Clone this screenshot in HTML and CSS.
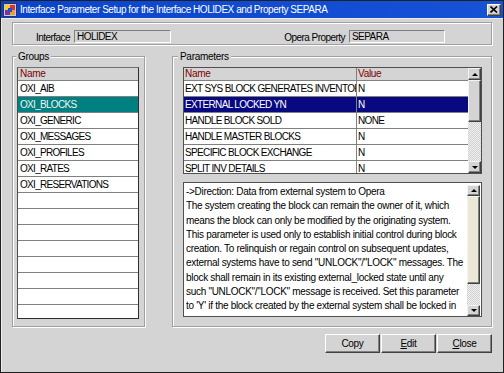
FILE: index.html
```html
<!DOCTYPE html>
<html lang="en">
<head>
    <meta charset="UTF-8">
    <title>Interface Parameter Setup</title>
    <link rel="stylesheet" href="styles.css">
</head>
<body>

<div class="window">

    <div class="titlebar">
        <svg class="app-icon" width="14" height="14" viewBox="0 0 14 14">
            <rect x="0.5" y="0.5" width="13" height="13" fill="#c8c8e8" stroke="#303060"/>
            <rect x="2" y="2" width="5" height="5" fill="#f0d020"/>
            <rect x="7" y="2" width="5" height="5" fill="#e03030"/>
            <rect x="2" y="7" width="5" height="5" fill="#8030a0"/>
            <rect x="7" y="7" width="5" height="5" fill="#f0a020"/>
            <rect x="5" y="5" width="4" height="4" fill="#2050d0"/>
        </svg>
        <span class="title">Interface Parameter Setup for the Interface HOLIDEX and Property SEPARA</span>
        <span class="close-btn">
            <svg width="8" height="7" viewBox="0 0 8 7">
                <path d="M0.5 0.5 L7 6.5 M7 0.5 L0.5 6.5" stroke="#000" stroke-width="1.6"/>
            </svg>
        </span>
    </div>

    <div class="content">

        <div class="top-panel">
            <span class="label interface-label">Interface</span>
            <span class="input interface-input">HOLIDEX</span>
            <span class="label property-label">Opera Property</span>
            <span class="input property-input">SEPARA</span>
        </div>

        <div class="frames">
            <fieldset class="frame groups">
                <legend>Groups</legend>
                <div class="list">
                    <div class="list-head">Name</div>
                    <div class="list-row">OXI_AIB</div>
                    <div class="list-row selected">OXI_BLOCKS</div>
                    <div class="list-row">OXI_GENERIC</div>
                    <div class="list-row">OXI_MESSAGES</div>
                    <div class="list-row">OXI_PROFILES</div>
                    <div class="list-row">OXI_RATES</div>
                    <div class="list-row">OXI_RESERVATIONS</div>
                    <div class="list-row"></div>
                    <div class="list-row"></div>
                    <div class="list-row"></div>
                    <div class="list-row"></div>
                    <div class="list-row"></div>
                    <div class="list-row"></div>
                    <div class="list-row"></div>
                    <div class="list-row"></div>
                </div>
            </fieldset>

            <fieldset class="frame params">
                <legend>Parameters</legend>
                <div class="grid-box">
                    <div class="table">
                        <div class="tr th">
                            <div class="td name">Name</div>
                            <div class="td value">Value</div>
                        </div>
                        <div class="tr">
                            <div class="td name">EXT SYS BLOCK GENERATES INVENTORY</div>
                            <div class="td value">N</div>
                        </div>
                        <div class="tr selected">
                            <div class="td name">EXTERNAL LOCKED YN</div>
                            <div class="td value">N</div>
                        </div>
                        <div class="tr">
                            <div class="td name">HANDLE BLOCK SOLD</div>
                            <div class="td value">NONE</div>
                        </div>
                        <div class="tr">
                            <div class="td name">HANDLE MASTER BLOCKS</div>
                            <div class="td value">N</div>
                        </div>
                        <div class="tr">
                            <div class="td name">SPECIFIC BLOCK EXCHANGE</div>
                            <div class="td value">N</div>
                        </div>
                        <div class="tr">
                            <div class="td name">SPLIT INV DETAILS</div>
                            <div class="td value">N</div>
                        </div>
                    </div>
                    <div class="vscroll">
                        <div class="sbtn up"></div>
                        <div class="thumb"></div>
                        <div class="track"></div>
                        <div class="sbtn down"></div>
                    </div>
                </div>

                <div class="desc">
                    <div class="desc-text">
                        -&gt;Direction: Data from external system to Opera<br>
                        The system creating the block can remain the owner of it, which<br>
                        means the block can only be modified by the originating system.<br>
                        This parameter is used only to establish initial control during block<br>
                        creation. To relinquish or regain control on subsequent updates,<br>
                        external systems have to send "UNLOCK"/"LOCK" messages. The<br>
                        block shall remain in its existing external_locked state until any<br>
                        such "UNLOCK"/"LOCK" message is received. Set this parameter<br>
                        to 'Y' if the block created by the external system shall be locked in<br>
                        OPERA.
                    </div>
                    <div class="vscroll desc-scroll">
                        <div class="sbtn up"></div>
                        <div class="thumb"></div>
                        <div class="track"></div>
                        <div class="sbtn down"></div>
                    </div>
                </div>
            </fieldset>
        </div>

        <div class="actions">
            <button class="btn">Copy</button>
            <button class="btn"><u>E</u>dit</button>
            <button class="btn"><u>C</u>lose</button>
        </div>

    </div>
</div>

</body>
</html>
```

FILE: styles.css
```css
* {
    box-sizing: border-box;
}

html, body {
    margin: 0;
    padding: 0;
}

body {
    width: 504px;
    height: 373px;
    overflow: hidden;
    background: #d4d4d4;
    font-family: "Liberation Sans", Arial, sans-serif;
    font-size: 10px;
    letter-spacing: -0.3px;
    color: #000;
}

.window {
    width: 504px;
    height: 373px;
    border: 1px solid #202020;
    background: #d4d4d4;
    display: flex;
    flex-direction: column;
}

/* title bar */

.titlebar {
    height: 17px;
    display: flex;
    align-items: center;
    padding: 0 2px 0 2px;
    background: linear-gradient(to right, #0a44cc, #1652d6);
    color: #fff;
}

.app-icon {
    flex: none;
    margin-right: 3px;
}

.title {
    font-size: 10px;
    letter-spacing: -0.45px;
    white-space: nowrap;
    flex: 1;
}

.close-btn {
    flex: none;
    width: 14px;
    height: 12px;
    display: flex;
    align-items: center;
    justify-content: center;
    background: #d4d4d4;
    border: 1px solid;
    border-color: #fff #404040 #404040 #fff;
    box-shadow: inset -1px -1px #808080;
}

/* main area */

.content {
    flex: 1;
    padding: 4px 11px 0 11px;
    box-shadow: inset 1px 1px #ececec;
}

.top-panel {
    height: 23px;
    display: flex;
    align-items: flex-end;
    padding: 0 0 1px 1px;
    border: 1px solid #a0a0a0;
    box-shadow: inset 1px 1px #fff, 1px 1px #fff;
}

.label {
    text-align: right;
    line-height: 13px;
    margin-bottom: -1px;
    margin-right: 4px;
    letter-spacing: -0.55px;
}

.interface-label {
    width: 56px;
}

.property-label {
    width: 174px;
}

.input {
    height: 13px;
    line-height: 11px;
    padding: 0 2px;
    letter-spacing: -0.55px;
    border: 1px solid;
    border-color: #808080 #fff #fff #808080;
    background: #d4d4d4;
}

.interface-input {
    width: 97px;
}

.property-input {
    width: 96px;
}

/* frames */

.frames {
    display: flex;
    gap: 27px;
    margin-top: 5px;
}

.frame {
    margin: 0;
    min-width: 0;
    border: 1px solid #a0a0a0;
    box-shadow: inset 1px 1px #fff, 1px 1px #fff;
}

.frame legend {
    padding: 0 2px;
    margin-left: -1px;
    line-height: 13px;
    font-size: 10px;
    background: #d4d4d4;
}

.groups {
    width: 133px;
    padding: 4px 5px 7px 4px;
}

.params {
    flex: 1;
    padding: 4px 9px 9px 10px;
}

.params legend {
    margin-left: -5px;
}

/* groups list */

.list {
    height: 252px;
    overflow: hidden;
    background: #fff;
    border: 1px solid #303030;
    border-top-color: #707070;
    border-left-color: #505050;
}

.list-head,
.th {
    height: 13px;
    line-height: 12px;
    padding-left: 2px;
    color: #800000;
    background: #d4d4d4;
    border-bottom: 1px solid #808080;
}

.list-row {
    height: 16px;
    line-height: 15px;
    padding-left: 2px;
    letter-spacing: -0.7px;
    border-bottom: 1px solid #808080;
    white-space: nowrap;
}

.list-row.selected {
    background: #008080;
    color: #f4f4f4;
}

/* parameters table */

.grid-box {
    height: 107px;
    display: flex;
    border: 1px solid #505050;
    background: #fff;
}

.table {
    flex: 1;
    overflow: hidden;
}

.tr {
    display: flex;
    height: 16px;
    line-height: 15px;
    letter-spacing: -0.65px;
    border-bottom: 1px solid #808080;
}

.tr.th {
    height: 13px;
    line-height: 12px;
    padding-left: 0;
    letter-spacing: -0.3px;
}

.td {
    padding: 0 1px;
    white-space: nowrap;
    overflow: hidden;
}

.td.name {
    width: 173px;
    flex: none;
    border-right: 1px solid #808080;
}

.td.value {
    flex: 1;
}

.tr.selected {
    background: #080880;
    color: #fff;
}

/* scrollbars */

.vscroll {
    width: 13px;
    flex: none;
    display: flex;
    flex-direction: column;
    background: #d4d4d4;
}

.sbtn,
.thumb {
    background: #d4d4d4;
    border: 1px solid;
    border-color: #f4f4f4 #404040 #404040 #f4f4f4;
    box-shadow: inset -1px -1px #808080;
}

.sbtn {
    height: 12px;
    flex: none;
    display: flex;
    align-items: center;
    justify-content: center;
}

.sbtn::before {
    content: "";
    border-left: 3px solid transparent;
    border-right: 3px solid transparent;
}

.sbtn.up::before {
    border-bottom: 3px solid #000;
}

.sbtn.down::before {
    border-top: 3px solid #000;
}

.thumb {
    height: 42px;
    flex: none;
}

.track {
    flex: 1;
    background-color: #f0f0f0;
    background-image: conic-gradient(#d0d0d0 25%, transparent 0 50%, #d0d0d0 0 75%, transparent 0);
    background-size: 2px 2px;
}

/* description box */

.desc {
    height: 135px;
    margin-top: 8px;
    display: flex;
    padding: 2px 1px 0 2px;
    background: #fff;
    border: 1px solid #505050;
}

.desc-text {
    flex: 1;
    overflow: hidden;
    white-space: nowrap;
    line-height: 14.3px;
}

.desc-scroll .sbtn {
    height: 11px;
}

.desc-scroll .thumb {
    height: 88px;
    background: #ebe8d8;
}

/* buttons */

.actions {
    display: flex;
    justify-content: flex-end;
    gap: 1px;
    margin-top: 7px;
}

.btn {
    width: 55px;
    height: 19px;
    padding: 0;
    font-family: "Liberation Sans", Arial, sans-serif;
    font-size: 10px;
    letter-spacing: -0.3px;
    color: #000;
    background: #d4d4d4;
    border: 1px solid;
    border-color: #fff #404040 #404040 #fff;
    box-shadow: inset -1px -1px #808080;
}
```
